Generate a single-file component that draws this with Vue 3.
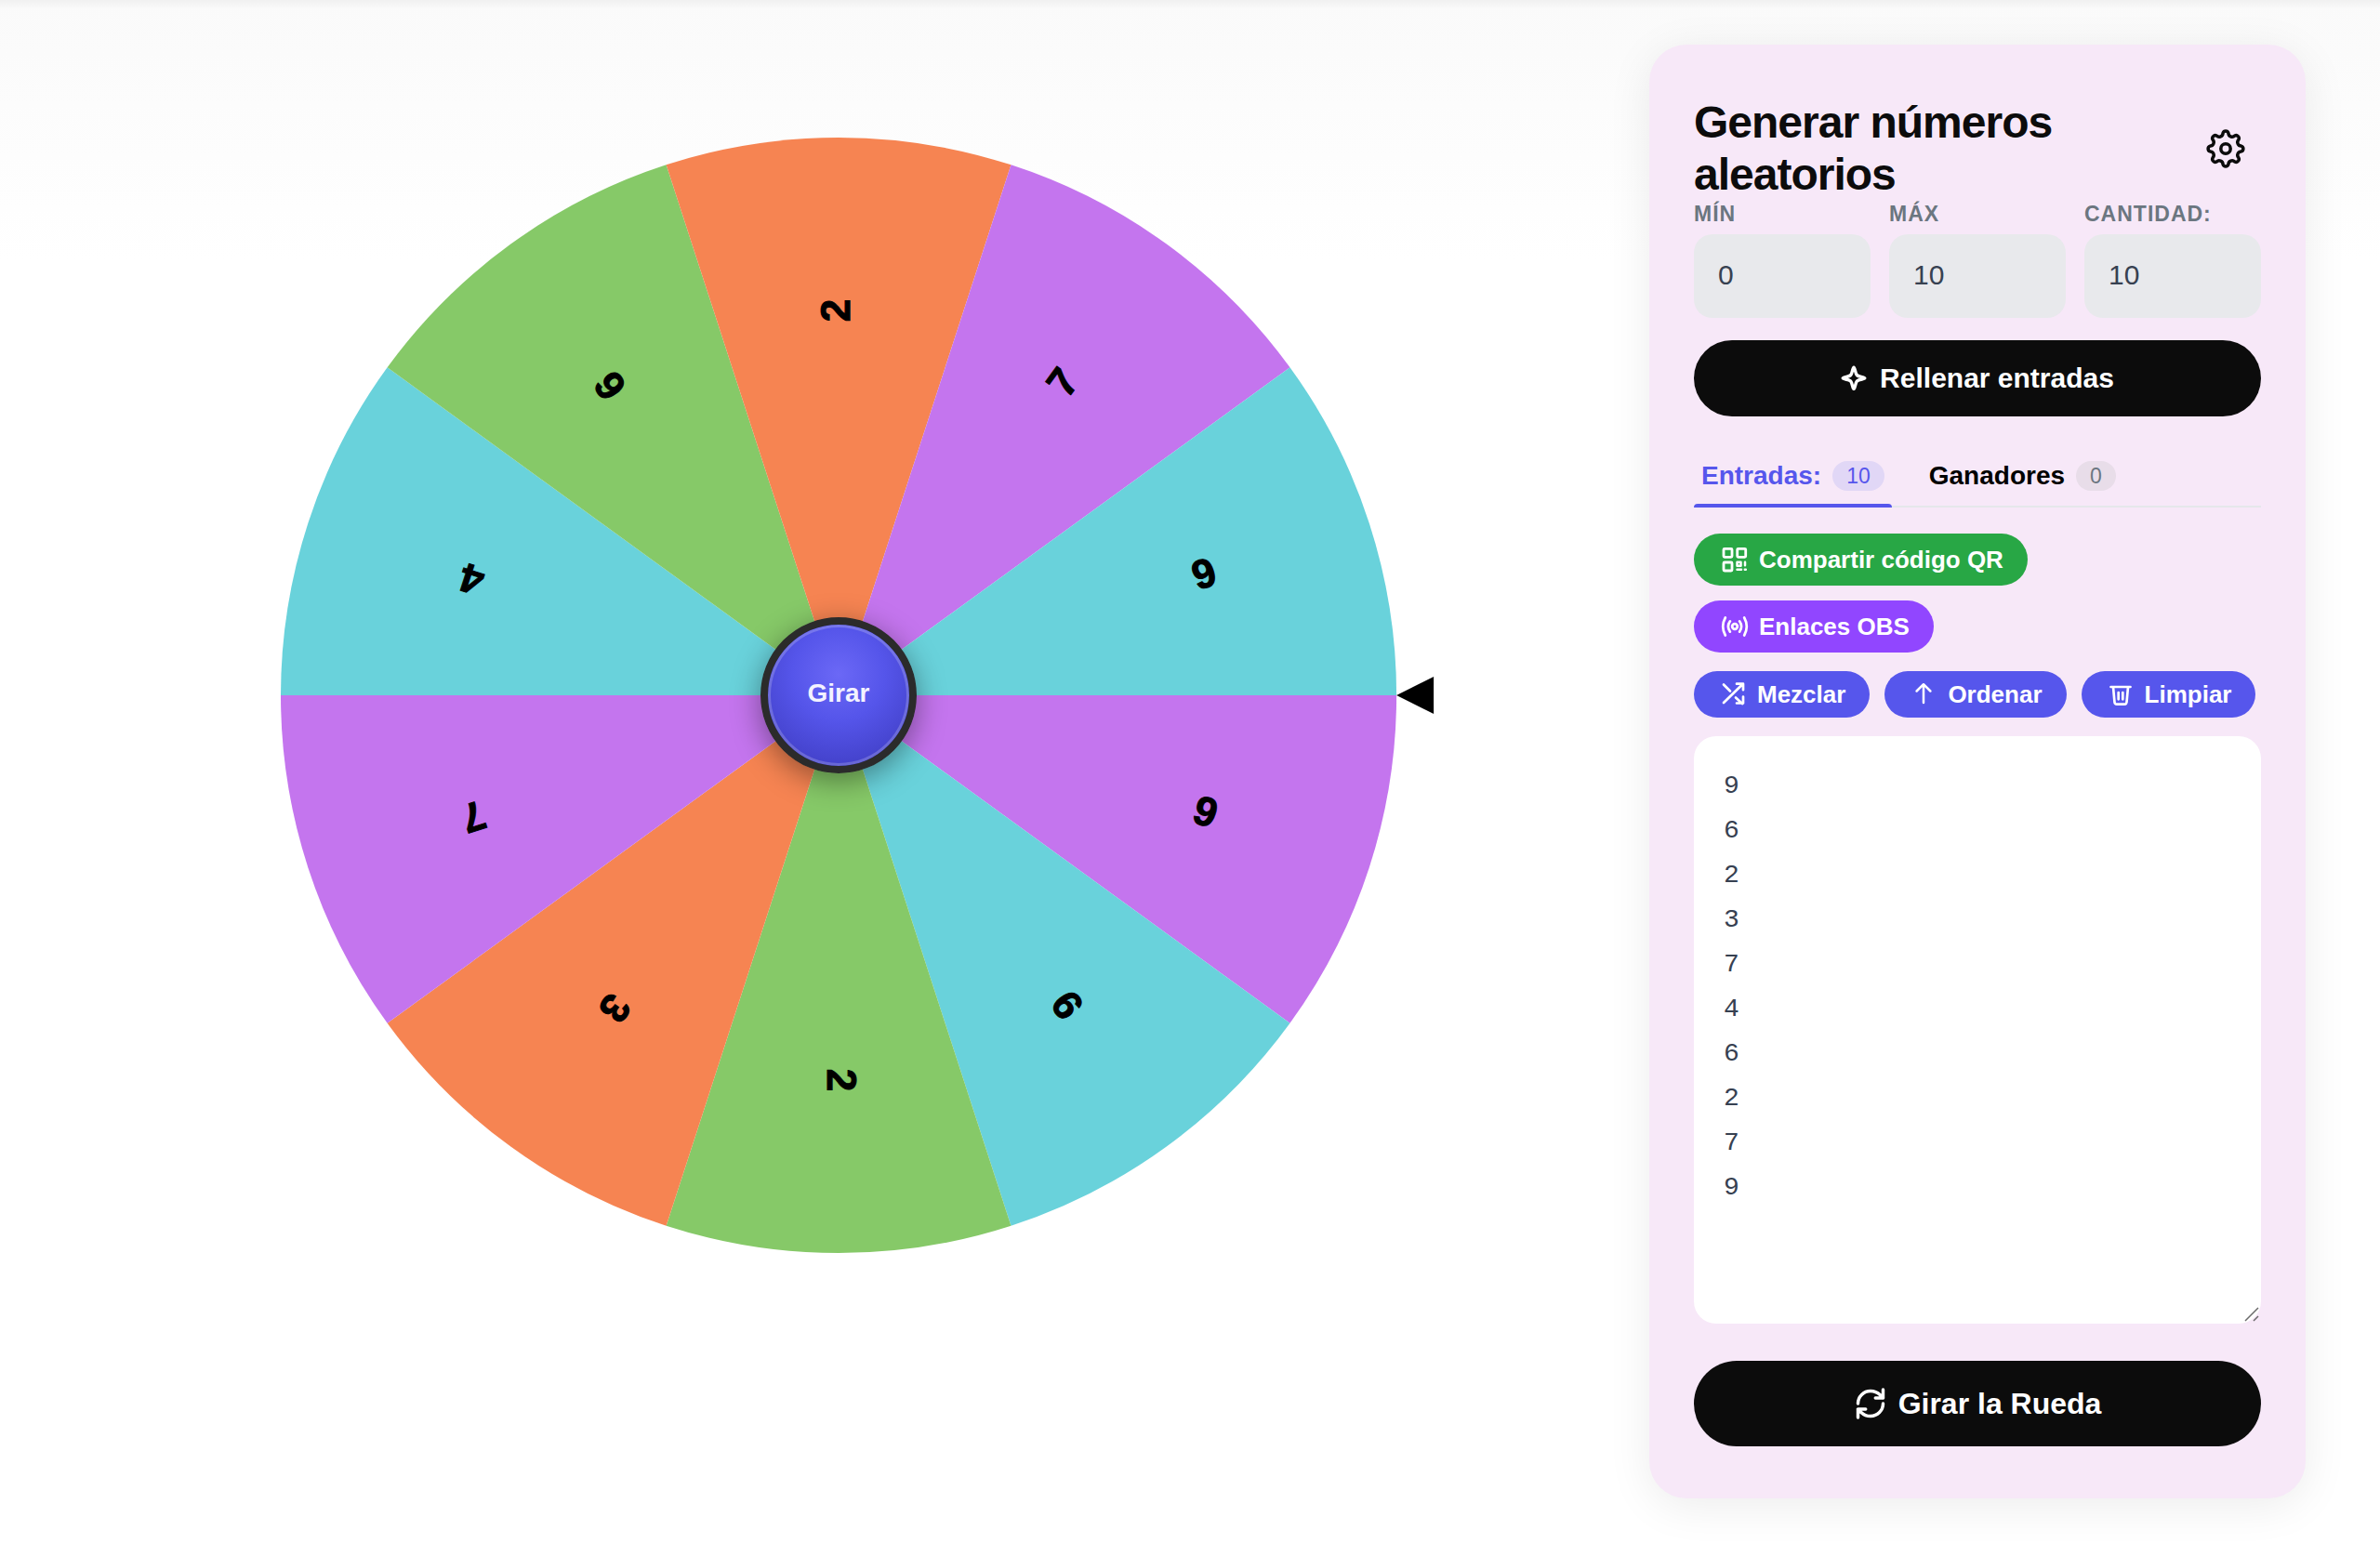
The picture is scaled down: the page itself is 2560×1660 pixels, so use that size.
<template>
  <div class="page">
    <main class="stage">
      <div class="wheel">
        <svg class="wheel-svg" viewBox="-600 -600 1200 1200" role="img" aria-label="Rueda">
          <g v-for="(slice, i) in slices" :key="i">
            <path :d="slice.path" :fill="slice.color" />
            <text :transform="`rotate(${slice.middle})`" x="414" y="12" class="slice-label">{{ slice.label }}</text>
          </g>
          <polygon points="600,0 640,-20 640,20" />
        </svg>
        <button type="button" class="hub" @click="spin">Girar</button>
      </div>
    </main>

    <aside class="panel">
      <header class="panel-header">
        <h1>Generar números aleatorios</h1>
        <button type="button" class="settings" aria-label="Ajustes">
          <svg viewBox="-22 -22 44 44" class="icon icon-gear">
            <path :d="gearPath" />
            <circle r="5.2" />
          </svg>
        </button>
      </header>

      <div class="fields">
        <div class="field">
          <label for="min">Mín</label>
          <input id="min" v-model="min" type="text" inputmode="numeric" />
        </div>
        <div class="field">
          <label for="max">Máx</label>
          <input id="max" v-model="max" type="text" inputmode="numeric" />
        </div>
        <div class="field">
          <label for="amount">Cantidad:</label>
          <input id="amount" v-model="amount" type="text" inputmode="numeric" />
        </div>
      </div>

      <button type="button" class="btn btn-dark btn-fill" @click="fillEntries">
        <svg viewBox="0 0 28 28" class="icon icon-28">
          <path d="M14 2.2C15.300 2.2 15.500 8.500 17.300 10.500S25.800 12.700 25.800 13.800 19.100 15.100 17.300 17.100 15.300 25.400 14 25.400 12.500 19.100 10.700 17.100 2.200 14.900 2.200 13.800 8.900 12.500 10.700 10.500 12.700 2.200 14 2.200z" stroke-width="3.400" />
        </svg>
        Rellenar entradas
      </button>

      <nav class="tabs">
        <button type="button" class="tab" :class="{ active: tab === 'entries' }" @click="tab = 'entries'">
          Entradas: <span class="badge">{{ entries.length }}</span>
        </button>
        <button type="button" class="tab" :class="{ active: tab === 'winners' }" @click="tab = 'winners'">
          Ganadores <span class="badge">{{ winners.length }}</span>
        </button>
      </nav>

      <div class="share">
        <button type="button" class="btn pill pill-green">
          <svg viewBox="0 0 32 32" class="icon icon-32">
            <g stroke-width="2.800">
              <rect x="4" y="4.300" width="9" height="9" rx="1" />
              <rect x="18.700" y="4.300" width="9" height="9" rx="1" />
              <rect x="4" y="19" width="9" height="9" rx="1" />
            </g>
            <g stroke-width="2.500">
              <rect x="18.500" y="18.700" width="4" height="4" />
              <path d="M27 18.700v3.500M18.500 26.800h4.500M26.800 26.800h1" />
            </g>
          </svg>
          Compartir código QR
        </button>
        <button type="button" class="btn pill pill-purple">
          <svg viewBox="0 0 32 32" class="icon icon-32">
            <circle cx="16" cy="16" r="2.800" stroke-width="2.800" />
            <path d="M10.900 10.300q-4 5.700 0 11.400M21.100 10.300q4 5.700 0 11.400M5.800 6.500q-5.200 9.500 0 19M26.200 6.500q5.200 9.500 0 19" stroke-width="2.700" />
          </svg>
          Enlaces OBS
        </button>
      </div>

      <div class="tools">
        <button type="button" class="btn pill pill-blue" @click="shuffle">
          <svg viewBox="0 0 28 28" class="icon icon-28">
            <path d="M4 23 24.500 3M18 2.700h7v6.500M4 3.500l7 7M17 17.500l7 6.500M25 16.500v7h-7" stroke-width="2.700" />
          </svg>
          Mezclar
        </button>
        <button type="button" class="btn pill pill-blue" @click="sort">
          <svg viewBox="0 0 28 28" class="icon icon-28">
            <path d="M14 23V3.200M6.600 10.500 14 3.200l7.400 7.300" stroke-width="2.500" />
          </svg>
          Ordenar
        </button>
        <button type="button" class="btn pill pill-blue" @click="text = ''">
          <svg viewBox="0 0 28 28" class="icon icon-28">
            <path d="M3.500 6h21M6 6l1.500 16.500q.2 2.200 2.500 2.200h8q2.300 0 2.500-2.200L22 6M11.700 12v7.300M16.300 12v7.300" stroke-width="2.700" />
          </svg>
          Limpiar
        </button>
      </div>

      <div class="entries-box">
        <textarea v-model="text" class="entries" aria-label="Entradas" spellcheck="false"></textarea>
        <svg viewBox="0 0 16 16" class="grip" aria-hidden="true">
          <path d="M1 15 15 1M10 15l5-5" />
        </svg>
      </div>

      <button type="button" class="btn btn-dark btn-spin" @click="spin">
        <svg viewBox="0 0 24 24" class="icon icon-36">
          <path d="M3 12a9 9 0 0 1 9-9 9.750 9.750 0 0 1 6.740 2.740L21 8M21 2v6h-5.500M21 12a9 9 0 0 1-9 9 9.750 9.750 0 0 1-6.740-2.740L3 16M8.500 16H3v6" stroke-width="2.300" />
        </svg>
        Girar la Rueda
      </button>
    </aside>
  </div>
</template>

<script setup>
import { computed, ref } from 'vue';

const min = ref('0');
const max = ref('10');
const amount = ref('10');
const tab = ref('entries');
const winners = ref([]);
const text = ref('9\n6\n2\n3\n7\n4\n6\n2\n7\n9');

const colors = ['#c475ee', '#69d2db', '#86c968', '#f68452'];
const radius = 600;

const entries = computed(() => text.value.split('\n').filter((line) => line.trim() !== ''));

const point = (r, degrees) => {
  const rad = (degrees * Math.PI) / 180;
  return `${(r * Math.cos(rad)).toFixed(2)} ${(r * Math.sin(rad)).toFixed(2)}`;
};

// Slices run clockwise, starting at the pointer
const slices = computed(() => {
  const step = 360 / entries.value.length;
  return entries.value.map((label, i) => {
    // the last color must not touch the same color at the start
    const isLast = i === entries.value.length - 1;
    const color = isLast && i % colors.length === 0 ? colors[1] : colors[i % colors.length];
    return {
      label,
      color,
      middle: (i + 0.5) * step,
      path: `M0 0L${point(radius, i * step)}A${radius} ${radius} 0 0 1 ${point(radius, (i + 1) * step)}Z`,
    };
  });
});

// Eight round teeth joined by shallow valleys
const gearPath = Array.from({ length: 8 }, (_, i) => {
  const a = i * 45;
  const start = i === 0 ? `M${point(17, -10)}` : '';
  return `${start}A3.1 3.1 0 0 1 ${point(17, a + 10)}A4 4 0 0 0 ${point(17, a + 35)}`;
}).join('') + 'Z';

const fillEntries = () => {
  const low = Number(min.value);
  const high = Number(max.value);
  text.value = Array.from({ length: Number(amount.value) }, () =>
    Math.floor(Math.random() * (high - low + 1)) + low
  ).join('\n');
};

const shuffle = () => {
  const list = [...entries.value];
  for (let i = list.length - 1; i > 0; i--) {
    const j = Math.floor(Math.random() * (i + 1));
    [list[i], list[j]] = [list[j], list[i]];
  }
  text.value = list.join('\n');
};

const sort = () => {
  text.value = [...entries.value].sort((a, b) => a.localeCompare(b, 'es', { numeric: true })).join('\n');
};

const spin = () => {
  if (!entries.value.length) return;
  winners.value.push(entries.value[Math.floor(Math.random() * entries.value.length)]);
};
</script>

<style>
body {
  margin: 0;
  background: #fff;
}
</style>

<style scoped>
.page {
  display: flex;
  align-items: flex-start;
  gap: 50px;
  box-sizing: border-box;
  min-height: 100vh;
  padding: 48px 80px;
  background:
    linear-gradient(rgba(0, 0, 0, 0.04), transparent) top / 100% 10px no-repeat,
    linear-gradient(#fafafa, #fff) top / 100% 280px no-repeat;
  font-family: 'Liberation Sans', Arial, sans-serif;
}

button {
  font-family: inherit;
  border: none;
  padding: 0;
  cursor: pointer;
}

.stage {
  flex: 1;
  display: flex;
  justify-content: center;
  padding-top: 100px;
}

.wheel {
  position: relative;
  width: 73%;
}

.wheel-svg {
  display: block;
  width: 100%;
  overflow: visible;
}

.slice-label {
  font-size: 44px;
  font-weight: bold;
  text-anchor: middle;
  stroke: #000;
  stroke-width: 1px;
}

.hub {
  position: absolute;
  top: 50%;
  left: 50%;
  transform: translate(-50%, -50%);
  box-sizing: border-box;
  width: 168px;
  height: 168px;
  padding-bottom: 4px;
  border: 8px solid #2b2b2b;
  border-radius: 50%;
  background: radial-gradient(circle at 50% 35%, #6b68f6, #5555ea 40%, #413fc6 85%);
  box-shadow: 0 8px 32px rgba(0, 0, 0, 0.4), inset 0 0 0 3px rgba(255, 255, 255, 0.2);
  color: #f3f2ff;
  font-size: 28px;
  font-weight: bold;
}

.panel {
  flex: 0 0 610px;
  display: flex;
  flex-direction: column;
  padding: 56px 48px;
  border-radius: 40px;
  background: #f7e8f8;
  box-shadow: 0 8px 48px rgba(0, 0, 0, 0.08);
}

.panel-header {
  display: flex;
  align-items: center;
  justify-content: space-between;
}

h1 {
  margin: 0;
  max-width: 480px;
  color: #0c0c0c;
  font-size: 48px;
  line-height: 56px;
  letter-spacing: -1px;
}

.settings {
  display: flex;
  padding: 16px;
  background: none;
  color: #0c0c0c;
}

.icon {
  flex: none;
  fill: none;
  stroke: currentColor;
  stroke-linecap: round;
  stroke-linejoin: round;
}

.icon-gear {
  width: 44px;
  height: 44px;
  stroke-width: 3.5;
}

.icon-28 {
  width: 28px;
  height: 28px;
}

.icon-32 {
  width: 32px;
  height: 32px;
}

.icon-36 {
  width: 36px;
  height: 36px;
}

.fields {
  display: grid;
  grid-template-columns: repeat(3, 1fr);
  gap: 20px;
}

.field {
  display: flex;
  flex-direction: column;
  gap: 8px;
}

.field label {
  color: #6b7680;
  font-size: 23px;
  font-weight: bold;
  line-height: 28px;
  letter-spacing: 1px;
  text-transform: uppercase;
}

.field input {
  box-sizing: border-box;
  width: 100%;
  height: 90px;
  padding: 0 26px 2px;
  border: none;
  border-radius: 20px;
  background: #e8e9ec;
  color: #374151;
  font-family: inherit;
  font-size: 30px;
}

.btn {
  display: flex;
  align-items: center;
  justify-content: center;
  gap: 12px;
  border-radius: 50px;
  color: #fff;
  font-weight: bold;
}

.btn-dark {
  background: #0c0c0c;
}

.btn-fill {
  gap: 14px;
  height: 82px;
  margin-top: 24px;
  font-size: 30px;
}

.tabs {
  display: flex;
  gap: 32px;
  margin-top: 32px;
  border-bottom: 2px solid #e5e7eb;
}

.tab {
  position: relative;
  display: flex;
  align-items: center;
  gap: 12px;
  padding: 16px 8px;
  background: none;
  color: #000;
  font-size: 28px;
  font-weight: bold;
}

.tab.active {
  color: #5656ec;
}

.tab.active::after {
  content: '';
  position: absolute;
  right: 0;
  bottom: -2px;
  left: 0;
  height: 4px;
  border-radius: 4px 4px 0 0;
  background: #5656ec;
}

.badge {
  padding: 0 15px;
  border-radius: 16px;
  background: #e8dde9;
  color: #6b7680;
  font-size: 23px;
  font-weight: normal;
  line-height: 32px;
}

.tab.active .badge {
  background: #e1d7f6;
  color: #5656ec;
}

.share {
  display: flex;
  flex-wrap: wrap;
  gap: 16px;
  margin-top: 28px;
}

.pill {
  padding: 0 26px 0 28px;
  font-size: 26px;
}

.share .pill {
  gap: 10px;
  height: 56px;
}

.pill-green {
  background: #28a745;
}

.pill-purple {
  background: #9146ff;
}

.tools {
  display: flex;
  gap: 16px;
  margin-top: 20px;
}

.pill-blue {
  height: 50px;
  background: #5656ec;
}

.entries-box {
  position: relative;
  display: flex;
  margin-top: 20px;
}

.entries {
  box-sizing: border-box;
  width: 100%;
  height: 632px;
  padding: 30px 32px;
  border: none;
  border-radius: 24px;
  background: #fff;
  color: #374151;
  font-family: 'Liberation Mono', monospace;
  font-size: 28px;
  line-height: 48px;
  resize: vertical;
}

.entries::-webkit-resizer {
  background: transparent;
}

.grip {
  position: absolute;
  right: 2px;
  bottom: 2px;
  width: 16px;
  height: 16px;
  fill: none;
  stroke: #6b6b6b;
  stroke-width: 1.5;
  pointer-events: none;
}

.btn-spin {
  height: 92px;
  margin-top: 40px;
  font-size: 32px;
}
</style>
